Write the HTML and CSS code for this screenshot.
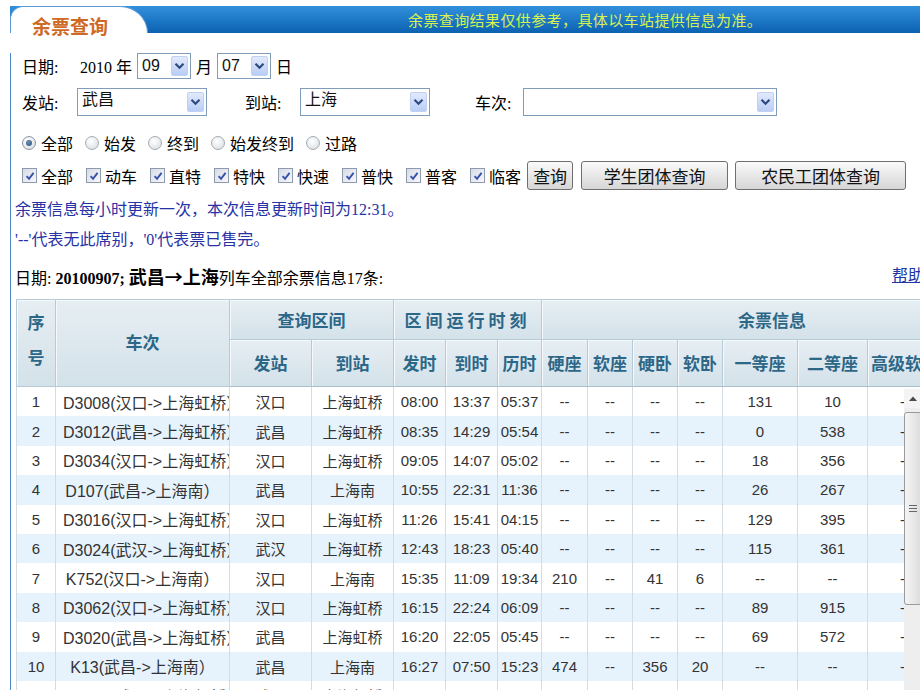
FILE: index.html
```html
<!DOCTYPE html>
<html lang="zh-CN">
<head>
<meta charset="utf-8">
<title>余票查询</title>
<link rel="stylesheet" href="styles.css">
</head>
<body>
<div class="page">
  <div class="bar">
    <div class="tab">余票查询</div>
    <div class="notice">余票查询结果仅供参考，具体以车站提供信息为准。</div>
  </div>
  <div class="content">
    <div class="row r-date">
      <span class="lbl w53">日期:</span>
      <span>2010 年</span>
      <span class="sel s54 h26"><span class="val">09</span><span class="dd"><svg width="11" height="8" viewBox="0 0 11 8"><path d="M1.5 1.8 L5.5 5.8 L9.5 1.8" fill="none" stroke="#2f4a7e" stroke-width="2.2"/></svg></span></span>
      <span>月</span>
      <span class="sel s54 h26"><span class="val">07</span><span class="dd"><svg width="11" height="8" viewBox="0 0 11 8"><path d="M1.5 1.8 L5.5 5.8 L9.5 1.8" fill="none" stroke="#2f4a7e" stroke-width="2.2"/></svg></span></span>
      <span>日</span>
    </div>
    <div class="row r-st">
      <span class="lbl w55">发站:</span>
      <span class="sel s130 h28"><span class="val top">武昌</span><span class="dd"><svg width="11" height="8" viewBox="0 0 11 8"><path d="M1.5 1.8 L5.5 5.8 L9.5 1.8" fill="none" stroke="#2f4a7e" stroke-width="2.2"/></svg></span></span>
      <span class="lbl w55 ml38">到站:</span>
      <span class="sel s130 h28"><span class="val top">上海</span><span class="dd"><svg width="11" height="8" viewBox="0 0 11 8"><path d="M1.5 1.8 L5.5 5.8 L9.5 1.8" fill="none" stroke="#2f4a7e" stroke-width="2.2"/></svg></span></span>
      <span class="lbl w48 ml45">车次:</span>
      <span class="sel s254 h28"><span class="val"></span><span class="dd"><svg width="11" height="8" viewBox="0 0 11 8"><path d="M1.5 1.8 L5.5 5.8 L9.5 1.8" fill="none" stroke="#2f4a7e" stroke-width="2.2"/></svg></span></span>
    </div>
    <div class="row r-radio">
      <span class="opt"><span class="radio on"><span class="dot"></span></span>全部</span>
      <span class="opt"><span class="radio"></span>始发</span>
      <span class="opt"><span class="radio"></span>终到</span>
      <span class="opt"><span class="radio"></span>始发终到</span>
      <span class="opt"><span class="radio"></span>过路</span>
    </div>
    <div class="row r-check">
      <span class="chk"><span class="cb"><svg width="12" height="12" viewBox="0 0 12 12"><path d="M2.6 6.2 L5 8.8 L9.6 2.8" fill="none" stroke="#3552a6" stroke-width="1.9"/></svg></span>全部</span>
      <span class="chk"><span class="cb"><svg width="12" height="12" viewBox="0 0 12 12"><path d="M2.6 6.2 L5 8.8 L9.6 2.8" fill="none" stroke="#3552a6" stroke-width="1.9"/></svg></span>动车</span>
      <span class="chk"><span class="cb"><svg width="12" height="12" viewBox="0 0 12 12"><path d="M2.6 6.2 L5 8.8 L9.6 2.8" fill="none" stroke="#3552a6" stroke-width="1.9"/></svg></span>直特</span>
      <span class="chk"><span class="cb"><svg width="12" height="12" viewBox="0 0 12 12"><path d="M2.6 6.2 L5 8.8 L9.6 2.8" fill="none" stroke="#3552a6" stroke-width="1.9"/></svg></span>特快</span>
      <span class="chk"><span class="cb"><svg width="12" height="12" viewBox="0 0 12 12"><path d="M2.6 6.2 L5 8.8 L9.6 2.8" fill="none" stroke="#3552a6" stroke-width="1.9"/></svg></span>快速</span>
      <span class="chk"><span class="cb"><svg width="12" height="12" viewBox="0 0 12 12"><path d="M2.6 6.2 L5 8.8 L9.6 2.8" fill="none" stroke="#3552a6" stroke-width="1.9"/></svg></span>普快</span>
      <span class="chk"><span class="cb"><svg width="12" height="12" viewBox="0 0 12 12"><path d="M2.6 6.2 L5 8.8 L9.6 2.8" fill="none" stroke="#3552a6" stroke-width="1.9"/></svg></span>普客</span>
      <span class="chk last"><span class="cb"><svg width="12" height="12" viewBox="0 0 12 12"><path d="M2.6 6.2 L5 8.8 L9.6 2.8" fill="none" stroke="#3552a6" stroke-width="1.9"/></svg></span>临客</span>
      <button class="btn b46">查询</button>
      <button class="btn b147">学生团体查询</button>
      <button class="btn b171">农民工团体查询</button>
    </div>
    <div class="info i1">余票信息每小时更新一次，本次信息更新时间为12:31。</div>
    <div class="info i2">'--'代表无此席别，'0'代表票已售完。</div>
    <div class="sum">
      <span>日期: <b class="num">20100907;</b> <b class="route">武昌→上海</b>列车全部余票信息17条:</span>
      <a class="help" href="#">帮助</a>
    </div>
    <div class="tablewrap">
      <table class="grid">
        <colgroup>
          <col style="width:39px"><col style="width:174px"><col style="width:82px"><col style="width:82px">
          <col style="width:52px"><col style="width:52px"><col style="width:44px">
          <col style="width:46px"><col style="width:45px"><col style="width:45px"><col style="width:45px">
          <col style="width:75px"><col style="width:70px"><col style="width:75px"><col style="width:60px">
        </colgroup>
        <thead>
          <tr class="h1">
            <th rowspan="2" class="xh">序<br>号</th>
            <th rowspan="2" class="cc">车次</th>
            <th colspan="2">查询区间</th>
            <th colspan="3" class="wide">区间运行时刻</th>
            <th colspan="8">余票信息</th>
          </tr>
          <tr class="h2">
            <th>发站</th><th>到站</th><th>发时</th><th>到时</th><th>历时</th>
            <th>硬座</th><th>软座</th><th>硬卧</th><th>软卧</th><th>一等座</th><th>二等座</th><th>高级软卧</th><th>其他</th>
          </tr>
        </thead>
        <tbody>
          <tr><td>1</td><td class="train">D3008(汉口-&gt;上海虹桥）</td><td>汉口</td><td>上海虹桥</td><td>08:00</td><td>13:37</td><td>05:37</td><td>--</td><td>--</td><td>--</td><td>--</td><td>131</td><td>10</td><td>--</td><td>--</td></tr>
          <tr><td>2</td><td class="train">D3012(武昌-&gt;上海虹桥）</td><td>武昌</td><td>上海虹桥</td><td>08:35</td><td>14:29</td><td>05:54</td><td>--</td><td>--</td><td>--</td><td>--</td><td>0</td><td>538</td><td>--</td><td>--</td></tr>
          <tr><td>3</td><td class="train">D3034(汉口-&gt;上海虹桥）</td><td>汉口</td><td>上海虹桥</td><td>09:05</td><td>14:07</td><td>05:02</td><td>--</td><td>--</td><td>--</td><td>--</td><td>18</td><td>356</td><td>--</td><td>--</td></tr>
          <tr><td>4</td><td class="train">D107(武昌-&gt;上海南）</td><td>武昌</td><td>上海南</td><td>10:55</td><td>22:31</td><td>11:36</td><td>--</td><td>--</td><td>--</td><td>--</td><td>26</td><td>267</td><td>--</td><td>--</td></tr>
          <tr><td>5</td><td class="train">D3016(汉口-&gt;上海虹桥）</td><td>汉口</td><td>上海虹桥</td><td>11:26</td><td>15:41</td><td>04:15</td><td>--</td><td>--</td><td>--</td><td>--</td><td>129</td><td>395</td><td>--</td><td>--</td></tr>
          <tr><td>6</td><td class="train">D3024(武汉-&gt;上海虹桥）</td><td>武汉</td><td>上海虹桥</td><td>12:43</td><td>18:23</td><td>05:40</td><td>--</td><td>--</td><td>--</td><td>--</td><td>115</td><td>361</td><td>--</td><td>--</td></tr>
          <tr><td>7</td><td class="train">K752(汉口-&gt;上海南）</td><td>汉口</td><td>上海南</td><td>15:35</td><td>11:09</td><td>19:34</td><td>210</td><td>--</td><td>41</td><td>6</td><td>--</td><td>--</td><td>--</td><td>--</td></tr>
          <tr><td>8</td><td class="train">D3062(汉口-&gt;上海虹桥）</td><td>汉口</td><td>上海虹桥</td><td>16:15</td><td>22:24</td><td>06:09</td><td>--</td><td>--</td><td>--</td><td>--</td><td>89</td><td>915</td><td>--</td><td>--</td></tr>
          <tr><td>9</td><td class="train">D3020(武昌-&gt;上海虹桥）</td><td>武昌</td><td>上海虹桥</td><td>16:20</td><td>22:05</td><td>05:45</td><td>--</td><td>--</td><td>--</td><td>--</td><td>69</td><td>572</td><td>--</td><td>--</td></tr>
          <tr><td>10</td><td class="train">K13(武昌-&gt;上海南）</td><td>武昌</td><td>上海南</td><td>16:27</td><td>07:50</td><td>15:23</td><td>474</td><td>--</td><td>356</td><td>20</td><td>--</td><td>--</td><td>--</td><td>--</td></tr>
          <tr><td>11</td><td class="train">D3022(武昌-&gt;上海虹桥）</td><td>武昌</td><td>上海虹桥</td><td>16:45</td><td>22:26</td><td>05:41</td><td>--</td><td>--</td><td>--</td><td>--</td><td>77</td><td>604</td><td>--</td><td>--</td></tr>
        </tbody>
      </table>
      <div class="vscroll">
        <div class="up"><svg width="8" height="5" viewBox="0 0 8 5"><path d="M0 5 L4 0.5 L8 5 Z" fill="#4a4a4a"/></svg></div>
        <div class="thumb"><span class="grip"></span><span class="grip"></span><span class="grip"></span></div>
      </div>
    </div>
  </div>
</div>
</body>
</html>
```
FILE: styles.css
```css
html, body {
  margin: 0;
  padding: 0;
}
body {
  width: 920px;
  height: 690px;
  overflow: hidden;
  background: #fff;
  font-family: "Liberation Serif", "Noto Sans CJK SC", serif;
  font-size: 16px;
  color: #000;
}
.page {
  width: 1100px;
  padding-left: 10px;
}
.bar {
  margin-top: 6px;
  height: 27px;
  display: flex;
  background: linear-gradient(#3190dc, #0c61b1);
}
.tab {
  width: 138px;
  height: 27px;
  box-sizing: border-box;
  background: #fff;
  border: 1px solid #5b9ad8;
  border-bottom: none;
  border-radius: 13px 28px 0 0 / 13px 27px 0 0;
  padding: 8px 0 0 21px;
  font-family: "Noto Sans CJK SC", sans-serif;
  font-weight: bold;
  font-size: 19px;
  line-height: 22px;
  color: #cf6a26;
  white-space: nowrap;
}
.notice {
  margin-left: 260px;
  color: #d8f24f;
  font-family: "Noto Sans CJK SC", sans-serif;
  font-size: 15px;
  letter-spacing: 0.4px;
  line-height: 27px;
  white-space: nowrap;
}
.content {
  border-left: 1px solid #4c8ad0;
  height: 720px;
}
.row {
  display: flex;
  align-items: center;
  padding-left: 11px;
  white-space: nowrap;
}
.r-date { margin-top: 20px; height: 26px; gap: 5px; }
.r-st { margin-top: 9px; height: 28px; }
.r-radio { margin-top: 17px; height: 20px; }
.r-check { margin-top: 8px; height: 29px; }
.lbl { display: inline-block; }
.w53 { width: 53px; }
.w55 { width: 55px; }
.w48 { width: 48px; }
.ml38 { margin-left: 38px; }
.ml45 { margin-left: 45px; }

.sel {
  display: inline-flex;
  align-items: center;
  justify-content: space-between;
  box-sizing: border-box;
  border: 1px solid #7f9db9;
  background: #fff;
  padding: 0 2px 0 4px;
  font-family: "Liberation Sans", "Noto Sans CJK SC", sans-serif;
  font-size: 16px;
  color: #111;
}
.s54 { width: 54px; }
.s130 { width: 130px; }
.s254 { width: 254px; }
.h26 { height: 26px; }
.h28 { height: 28px; }
.val.top { align-self: flex-start; line-height: 22px; }
.dd {
  width: 17px;
  height: 20px;
  box-sizing: border-box;
  display: flex;
  align-items: center;
  justify-content: center;
  background: linear-gradient(#e2eafd, #b9cdf6);
  border: 1px solid #bfd0f2;
  border-radius: 2px;
}

.opt {
  display: inline-flex;
  align-items: center;
  gap: 5px;
  margin-right: 12px;
}
.radio {
  width: 14px;
  height: 14px;
  box-sizing: border-box;
  border-radius: 50%;
  border: 1px solid #a3acb5;
  background: radial-gradient(circle at 40% 35%, #ffffff, #d5dade);
  display: inline-flex;
  align-items: center;
  justify-content: center;
}
.radio.on {
  border-color: #8a97a6;
}
.dot {
  width: 6px;
  height: 6px;
  border-radius: 50%;
  background: radial-gradient(circle at 40% 35%, #6b8fb5, #2a4f7a);
}
.chk {
  display: inline-flex;
  align-items: center;
  gap: 4px;
  margin-right: 13px;
}
.chk.last { margin-right: 6px; }
.cb {
  width: 15px;
  height: 15px;
  box-sizing: border-box;
  border: 1px solid #8e9aab;
  background: linear-gradient(135deg, #d6dbe6, #f7f8fb);
  display: inline-flex;
  align-items: center;
  justify-content: center;
}
.btn {
  height: 29px;
  box-sizing: border-box;
  border: 1px solid #6f6f6f;
  border-radius: 3px;
  background: linear-gradient(#fafafa, #e4e4e4 60%, #d6d6d6);
  font-family: "Noto Sans CJK SC", sans-serif;
  font-size: 17px;
  color: #111;
  padding: 0;
  line-height: 25px;
}
.b46 { width: 46px; margin-right: 8px; }
.b147 { width: 147px; margin-right: 7px; }
.b171 { width: 171px; }

.info {
  padding-left: 4px;
  line-height: 24px;
  color: #2632a6;
  white-space: nowrap;
}
.i1 { margin-top: 8px; }
.i2 { margin-top: 6px; }
.sum {
  margin-top: 12px;
  padding-left: 4px;
  width: 909px;
  line-height: 24px;
  display: flex;
  justify-content: space-between;
  white-space: nowrap;
}
.num { font-weight: bold; }
.route {
  font-family: "Noto Sans CJK SC", sans-serif;
  font-weight: bold;
  font-size: 18px;
}
.help {
  color: #1d35a8;
  text-decoration: underline;
}

.tablewrap {
  position: relative;
  margin-top: 8px;
  margin-left: 5px;
  height: 420px;
  overflow: hidden;
}
.grid {
  border-collapse: collapse;
  table-layout: fixed;
  width: 986px;
}
.grid th {
  background: linear-gradient(#e6eef3, #d3e1e9);
  border: 1px solid #b6cad7;
  box-shadow: inset 1px 1px 0 #f5f9fb;
  color: #2d6788;
  font-family: "Noto Sans CJK SC", sans-serif;
  font-weight: bold;
  font-size: 17px;
  line-height: 28px;
  padding: 0;
  white-space: nowrap;
  overflow: hidden;
}
.grid th.xh { line-height: 35px; padding-bottom: 8px; }
.grid th.cc { padding-bottom: 3px; }
.grid th.wide { letter-spacing: 4px; }
.grid tr.h1 { height: 40px; }
.grid tr.h2 { height: 47px; }
.grid thead tr.h2 th { border-bottom-color: #a9bfcd; }
.grid td {
  height: 29.4px;
  padding: 0 2px;
  border-left: 1px solid #d4dce2;
  border-right: 1px solid #d4dce2;
  text-align: center;
  white-space: nowrap;
  overflow: hidden;
  font-family: "Liberation Sans", "Noto Sans CJK SC", sans-serif;
  font-size: 15px;
  color: #333;
}
.grid td.train {
  padding: 0 7px;
  font-size: 16px;
}
.grid tbody tr:nth-child(even) td { background: #e6f2fc; }

.vscroll {
  position: absolute;
  left: 888px;
  top: 90px;
  width: 18px;
  height: 330px;
  background: #eeeeee;
  display: flex;
  flex-direction: column;
}
.up {
  height: 19px;
  display: flex;
  align-items: center;
  justify-content: center;
  background: #f4f4f4;
}
.thumb {
  margin-top: 4px;
  height: 193px;
  box-sizing: border-box;
  border: 1px solid #9a9a9a;
  border-radius: 3px;
  background: linear-gradient(90deg, #f5f5f5, #dcdcdc);
  display: flex;
  flex-direction: column;
  align-items: center;
  justify-content: center;
  gap: 2px;
}
.grip {
  width: 8px;
  height: 1px;
  background: #666;
}
```
